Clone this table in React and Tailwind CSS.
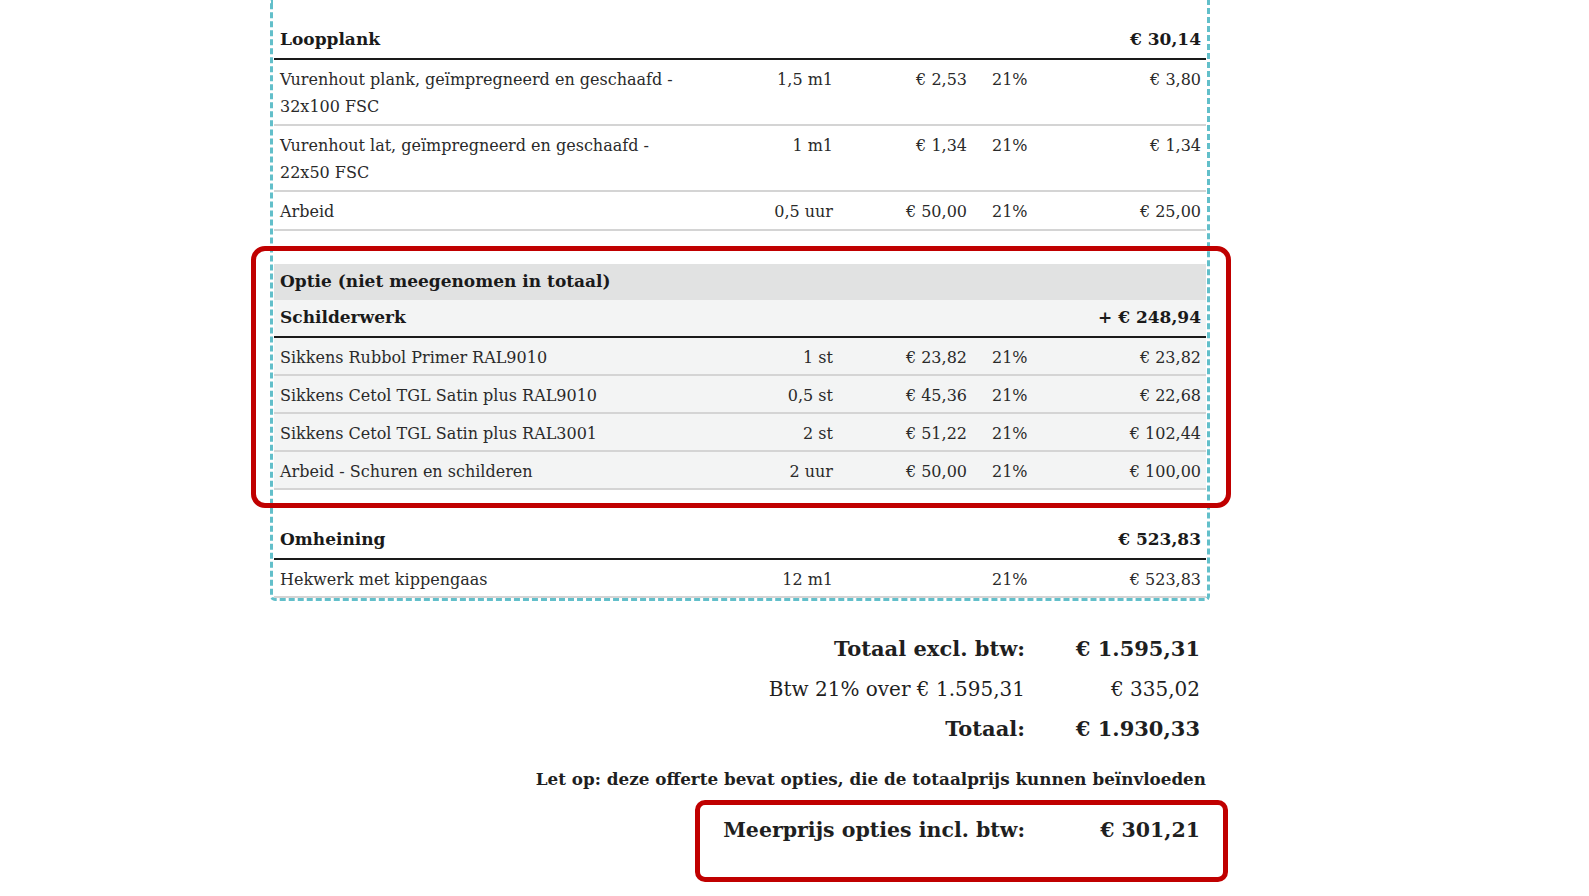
import React from 'react';

const font = { fontFamily: '"DejaVu Serif", Georgia, serif' };

const loopplank = [
  { desc: 'Vurenhout plank, geïmpregneerd en geschaafd - 32x100 FSC', qty: '1,5 m1', price: '€ 2,53', vat: '21%', total: '€ 3,80' },
  { desc: 'Vurenhout lat, geïmpregneerd en geschaafd - 22x50 FSC', qty: '1 m1', price: '€ 1,34', vat: '21%', total: '€ 1,34' },
  { desc: 'Arbeid', qty: '0,5 uur', price: '€ 50,00', vat: '21%', total: '€ 25,00' },
];

const schilderwerk = [
  { desc: 'Sikkens Rubbol Primer RAL9010', qty: '1 st', price: '€ 23,82', vat: '21%', total: '€ 23,82' },
  { desc: 'Sikkens Cetol TGL Satin plus RAL9010', qty: '0,5 st', price: '€ 45,36', vat: '21%', total: '€ 22,68' },
  { desc: 'Sikkens Cetol TGL Satin plus RAL3001', qty: '2 st', price: '€ 51,22', vat: '21%', total: '€ 102,44' },
  { desc: 'Arbeid - Schuren en schilderen', qty: '2 uur', price: '€ 50,00', vat: '21%', total: '€ 100,00' },
];

const omheining = [
  { desc: 'Hekwerk met kippengaas', qty: '12 m1', price: '', vat: '21%', total: '€ 523,83' },
];

const ItemRow = ({ item, compact }) => (
  <div className={`grid grid-cols-[426px_133px_134px_83px_1fr] border-b-2 border-[#d4d4d4] pt-[6px] text-[16px] leading-[27px] text-[#2a2a2a] ${compact ? 'pb-[3px]' : 'pb-[4px]'}`}>
    <div className="pl-[6px] pr-[18px]">{item.desc}</div>
    <div className="text-right">{item.qty}</div>
    <div className="text-right">{item.price}</div>
    <div className="pl-[25px]">{item.vat}</div>
    <div className="text-right pr-[5px]">{item.total}</div>
  </div>
);

const GroupHeader = ({ title, total }) => (
  <div className="flex items-center justify-between h-[38px] border-b-2 border-[#1a1a1a] px-[6px] pr-[5px] text-[17px] font-bold text-[#1a1a1a]">
    <span>{title}</span>
    <span>{total}</span>
  </div>
);

const TotalRow = ({ label, value, bold }) => (
  <div className={`flex justify-end h-[40px] items-center text-[#1f1f1f] ${bold ? 'font-bold text-[21px]' : 'text-[20px]'}`}>
    <span>{label}</span>
    <span className="w-[185px] text-right pr-[10px]">{value}</span>
  </div>
);

export default function App() {
  return (
    <div className="min-h-screen bg-white" style={font}>
      <div className="ml-[270px] w-[940px]">
        <div className="relative border-x-[3px] border-b-[3px] border-dashed border-[#62bfca] rounded-b-[5px] px-[1px] pt-[22px]">
          <GroupHeader title="Loopplank" total="€ 30,14" />
          {loopplank.map((item, i) => <ItemRow key={i} item={item} />)}

          <div className="mt-[33px] bg-[#f3f4f4]">
            <div className="bg-[#e1e2e2] h-[36px] flex items-center px-[6px] text-[17px] font-bold text-[#1a1a1a]">
              Optie (niet meegenomen in totaal)
            </div>
            <GroupHeader title="Schilderwerk" total="+ € 248,94" />
            {schilderwerk.map((item, i) => <ItemRow key={i} item={item} compact />)}
          </div>

          <div className="mt-[32px]">
            <GroupHeader title="Omheining" total="€ 523,83" />
            {omheining.map((item, i) => <ItemRow key={i} item={item} compact />)}
          </div>

          {/* annotatie rond de optie */}
          <div className="absolute left-[-22px] top-[246px] w-[980px] h-[262px] border-[5px] border-[#c00000] rounded-[14px] pointer-events-none" />
        </div>

        <div className="mt-[28px]">
          <TotalRow label="Totaal excl. btw:" value="€ 1.595,31" bold />
          <TotalRow label="Btw 21% over € 1.595,31" value="€ 335,02" />
          <TotalRow label="Totaal:" value="€ 1.930,33" bold />
          <div className="mt-[16px] text-right pr-[4px] text-[16.8px] font-bold text-[#1f1f1f] leading-[28px]">
            Let op: deze offerte bevat opties, die de totaalprijs kunnen beïnvloeden
          </div>
          <div className="ml-[425px] mr-[-18px] mt-[7px] h-[82px] border-[5px] border-[#c00000] rounded-[10px] pt-[10px]">
            <div className="flex justify-end text-[20.5px] font-bold text-[#1f1f1f]">
              <span>Meerprijs opties incl. btw:</span>
              <span className="w-[198px] text-right pr-[23px]">€ 301,21</span>
            </div>
          </div>
        </div>
      </div>
    </div>
  );
}
